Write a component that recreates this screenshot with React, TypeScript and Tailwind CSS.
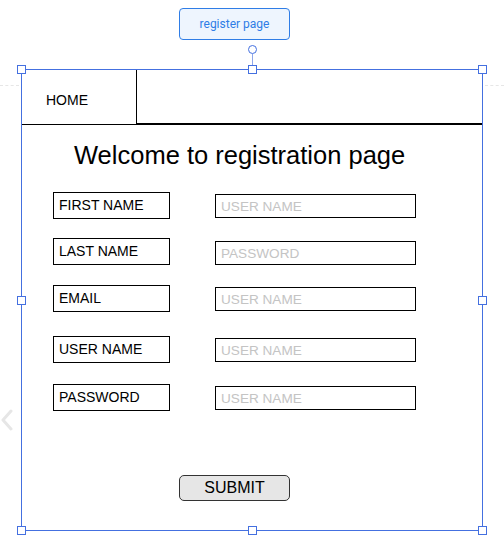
const rows = [
  { label: "FIRST NAME", placeholder: "USER NAME", mt: "mt-[23px]", inputMt: "mt-[2px]" },
  { label: "LAST NAME", placeholder: "PASSWORD", mt: "mt-[19px]", inputMt: "mt-[3px]" },
  { label: "EMAIL", placeholder: "USER NAME", mt: "mt-[20px]", inputMt: "mt-[2px]" },
  { label: "USER NAME", placeholder: "USER NAME", mt: "mt-[24px]", inputMt: "mt-[2px]" },
  { label: "PASSWORD", placeholder: "USER NAME", mt: "mt-[21px]", inputMt: "mt-[2px]" },
];

const handles = [
  "left-[17px] top-[65px]",
  "left-[248px] top-[65px]",
  "left-[478px] top-[65px]",
  "left-[17px] top-[296px]",
  "left-[478px] top-[296px]",
  "left-[17px] top-[526px]",
  "left-[248px] top-[526px]",
  "left-[478px] top-[526px]",
];

export default function App() {
  return (
    <div className="relative w-[504px] h-[557px] overflow-hidden bg-white font-['Liberation_Sans',Arial,sans-serif] text-black">
      {/* canvas guides */}
      <div className="absolute left-0 top-[85px] w-[19px] border-t border-dashed border-[#e6e6e6]" />
      <div className="absolute left-[485px] top-[85px] w-[19px] border-t border-dashed border-[#e6e6e6]" />
      <svg className="absolute left-0 top-[409px]" width="14" height="22" viewBox="0 0 14 22">
        <polyline points="11,2 3,11 11,20" fill="none" stroke="#e6e6e6" strokeWidth="3" strokeLinecap="round" strokeLinejoin="round" />
      </svg>

      {/* frame label */}
      <div className="absolute left-[179px] top-[8px] w-[111px] h-[32px] rounded-[4px] border border-[#2f7de6] bg-[#eef5fe] flex items-center justify-center text-[12px] text-[#2f7de6] font-['Roboto',Arial,sans-serif]">
        register page
      </div>

      {/* the frame */}
      <div className="ml-[21px] mt-[69px] w-[462px] h-[462px] border border-[#4470e0] flex flex-col">
        <div className="flex h-[55px]">
          <div className="w-[115px] border-r border-b border-black flex items-center pl-[24px] pt-[7px] text-[14px]">
            HOME
          </div>
          <div className="flex-1 border-b-2 border-black" />
        </div>

        <div className="ml-[52px] mt-[18px] text-[25.5px] leading-none whitespace-nowrap">
          Welcome to registration page
        </div>

        {rows.map((r) => (
          <div key={r.label} className={`flex items-start ml-[31px] ${r.mt}`}>
            <div className="w-[117px] h-[27px] border border-black pl-[5px] text-[14px] leading-[25px] whitespace-nowrap">
              {r.label}
            </div>
            <input
              readOnly
              placeholder={r.placeholder}
              className={`ml-[45px] ${r.inputMt} w-[201px] h-[24px] border border-black pl-[5px] pt-[2px] text-[13.6px] outline-none placeholder:text-[#c4c4c4]`}
            />
          </div>
        ))}

        <button className="ml-[157px] mt-[64px] w-[111px] h-[26px] rounded-[5px] border border-[#333] bg-[#e6e6e6] text-[16px] leading-none">
          SUBMIT
        </button>
      </div>

      {/* selection handles */}
      <div className="absolute left-[252px] top-[54px] w-px h-[12px] bg-[#8fa6ea]" />
      <div className="absolute left-[248px] top-[45px] w-[9px] h-[9px] rounded-full border border-[#4470e0] bg-white" />
      {handles.map((h) => (
        <div key={h} className={`absolute ${h} w-[9px] h-[9px] border border-[#4470e0] bg-white`} />
      ))}
    </div>
  );
}
